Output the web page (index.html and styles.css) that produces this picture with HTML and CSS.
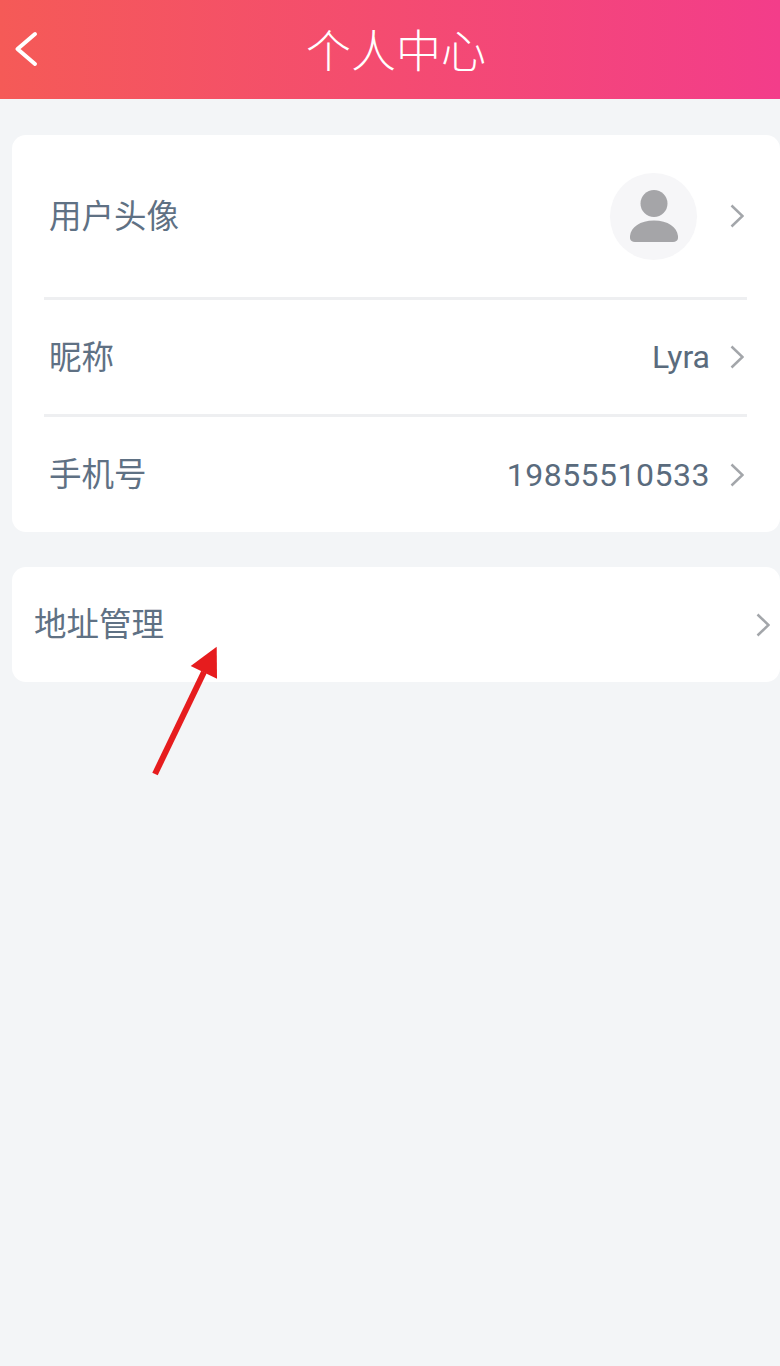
FILE: index.html
```html
<!DOCTYPE html>
<html lang="zh-CN">
<head>
  <meta charset="UTF-8">
  <meta name="viewport" content="width=device-width, initial-scale=1.0">
  <title>个人中心</title>
  <link rel="stylesheet" href="styles.css">
</head>
<body>
  <header class="top-bar">
    <svg class="back-icon" width="26" height="36" viewBox="0 0 26 36">
      <path d="M23 3 L5.500 18 M5.500 18 L23 33" />
    </svg>
    <h1 class="top-title">个人中心</h1>
  </header>

  <main class="content">
    <section class="card profile-card">
      <div class="row avatar-row">
        <span class="row-label">用户头像</span>
        <div class="avatar">
          <svg width="48" height="52" viewBox="0 0 48 52">
            <circle cx="24" cy="13.500" r="13.500" fill="#a5a5a8"/>
            <path d="M0 46 C1 37 10 30.500 24 30.500 C38 30.500 47 37 48 46 C48.500 50 46.500 52 43 52 L5 52 C1.500 52 -0.500 50 0 46 Z" fill="#a5a5a8"/>
          </svg>
        </div>
        <svg class="chevron" width="14" height="24" viewBox="0 0 14 24"><path d="M1.500 1.500 L12.500 12 L1.500 22.500"/></svg>
      </div>
      <div class="row">
        <span class="row-label">昵称</span>
        <span class="row-value name-value">Lyra</span>
        <svg class="chevron" width="14" height="24" viewBox="0 0 14 24"><path d="M1.500 1.500 L12.500 12 L1.500 22.500"/></svg>
      </div>
      <div class="row">
        <span class="row-label">手机号</span>
        <span class="row-value">19855510533</span>
        <svg class="chevron" width="14" height="24" viewBox="0 0 14 24"><path d="M1.500 1.500 L12.500 12 L1.500 22.500"/></svg>
      </div>
    </section>

    <section class="card address-card">
      <span class="row-label">地址管理</span>
      <svg class="chevron" width="14" height="24" viewBox="0 0 14 24"><path d="M1.500 1.500 L12.500 12 L1.500 22.500"/></svg>
    </section>
  </main>

  <!-- red annotation arrow on top of the page -->
  <svg class="annotation" width="70" height="135" viewBox="0 0 70 135">
    <path d="M4 130 L53 28" class="annotation-line"/>
    <path d="M65.700 2.700 L66 34.700 L39.700 22 Z" fill="#e61c1e"/>
  </svg>
</body>
</html>
```

FILE: styles.css
```css
* {
  box-sizing: border-box;
}

body {
  margin: 0;
  height: 1366px;
  overflow: hidden;
  position: relative;
  background-color: #f3f5f7;
  font-family: "Roboto", "Noto Sans CJK SC", sans-serif;
}

.top-bar {
  height: 99px;
  background: linear-gradient(90deg, #f55a57, #f33d8a);
  display: flex;
  align-items: center;
  justify-content: center;
  position: relative;
  padding: 0 0 2px 12px;
}

.back-icon {
  position: absolute;
  left: 12px;
  top: 31px;
}

.back-icon path {
  fill: none;
  stroke: #fff;
  stroke-width: 4;
  stroke-linecap: round;
}

.top-title {
  margin: 0;
  color: #fff;
  font-size: 45px;
  font-weight: 300;
}

.content {
  padding: 36px 0 0 12px;
}

.card {
  background: #fff;
  border-radius: 14px;
}

.profile-card {
  height: 397px;
  padding: 0 33px 0 32px;
  margin-bottom: 35px;
}

.row {
  height: 117px;
  display: flex;
  align-items: center;
  border-bottom: 3px solid #eeeff1;
  padding-left: 5px;
}

.row:last-child {
  border-bottom: none;
  height: 115px;
}

.avatar-row {
  height: 165px;
}

.row-label {
  font-size: 32.500px;
  color: #5f7184;
  margin-right: auto;
  padding-bottom: 6px;
}

.row-value {
  font-size: 32px;
  color: #5a6b7d;
  letter-spacing: 0.500px;
}

.name-value {
  letter-spacing: 0;
}

.avatar {
  width: 87px;
  height: 87px;
  border-radius: 50%;
  background: #f6f6f8;
  display: flex;
  align-items: center;
  justify-content: center;
}

.chevron {
  margin-left: 20px;
  margin-right: 3px;
  flex-shrink: 0;
}

.avatar-row .chevron {
  margin-left: 33px;
}

.chevron path {
  fill: none;
  stroke: #a3a6aa;
  stroke-width: 2.500;
}

.address-card {
  height: 115px;
  display: flex;
  align-items: center;
  padding: 0 7px 0 22px;
}

.annotation {
  position: absolute;
  left: 151px;
  top: 644px;
}

.annotation-line {
  fill: none;
  stroke: #e61c1e;
  stroke-width: 6;
}
```
